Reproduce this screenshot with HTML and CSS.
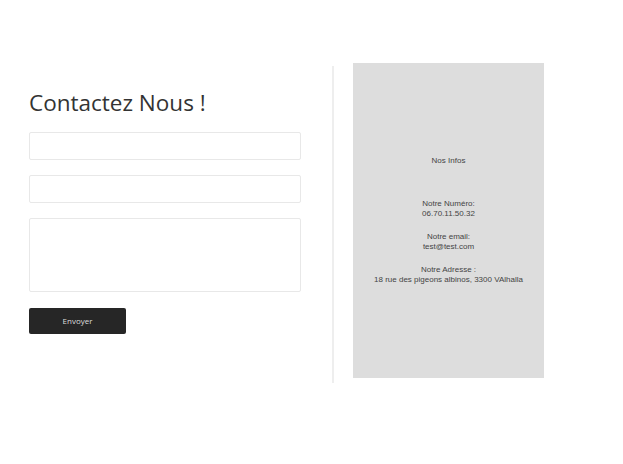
FILE: index.html
```html
<!DOCTYPE html>
<html lang="fr">
<head>
<meta charset="utf-8">
<title>Contact</title>
<link rel="stylesheet" href="styles.css">
</head>
<body>
<main class="page">
  <section class="contact">
    <h1 class="title">Contactez Nous !</h1>
    <form class="form">
      <input class="field" type="text">
      <input class="field" type="email">
      <textarea class="field area"></textarea>
      <button class="send" type="button">Envoyer</button>
    </form>
  </section>
  <div class="divider"></div>
  <aside class="infos">
    <p class="infos-title">Nos Infos</p>
    <p class="info">Notre Numéro:<br>06.70.11.50.32</p>
    <p class="info">Notre email:<br>test@test.com</p>
    <p class="info">Notre Adresse :<br>18 rue des pigeons albinos, 3300 VAlhalla</p>
  </aside>
</main>
</body>
</html>
```
FILE: styles.css
```css
* { box-sizing: border-box; }
html, body { margin: 0; padding: 0; background: #fff; }
.page {
  display: flex;
  align-items: flex-start;
  padding: 63px 0 0 29px;
}
.contact {
  width: 272px;
  padding-top: 26px;
}
.title {
  margin: 0 0 15px;
  font-family: "Open Sans", sans-serif;
  font-weight: 400;
  font-size: 22.5px;
  line-height: 28px;
  color: #333;
}
.form {
  display: flex;
  flex-direction: column;
  align-items: flex-start;
}
.field {
  display: block;
  width: 272px;
  height: 28px;
  margin: 0 0 15px;
  border: 1px solid #e8e8e8;
  border-radius: 2px;
  background: #fff;
  padding: 0;
  outline: none;
  resize: none;
}
.area {
  height: 74px;
  margin-bottom: 16px;
}
.send {
  width: 97px;
  height: 26px;
  border: 0;
  border-radius: 2px;
  background: #262626;
  color: #ddd;
  font-family: "Open Sans", sans-serif;
  font-size: 8px;
  line-height: 24px;
  padding: 0;
}
.divider {
  width: 2px;
  height: 317px;
  margin: 3px 0 0 31px;
  background: #eeeeee;
}
.infos {
  width: 191px;
  height: 315px;
  margin-left: 19px;
  background: #dddddd;
  display: flex;
  flex-direction: column;
  justify-content: center;
  align-items: center;
  text-align: center;
  font-family: "Liberation Sans", Arial, sans-serif;
  font-size: 8px;
  line-height: 10px;
  color: #444;
}
.infos p { margin: 0; }
.infos-title { margin-bottom: 33px !important; }
.info + .info { margin-top: 13px !important; }
```
